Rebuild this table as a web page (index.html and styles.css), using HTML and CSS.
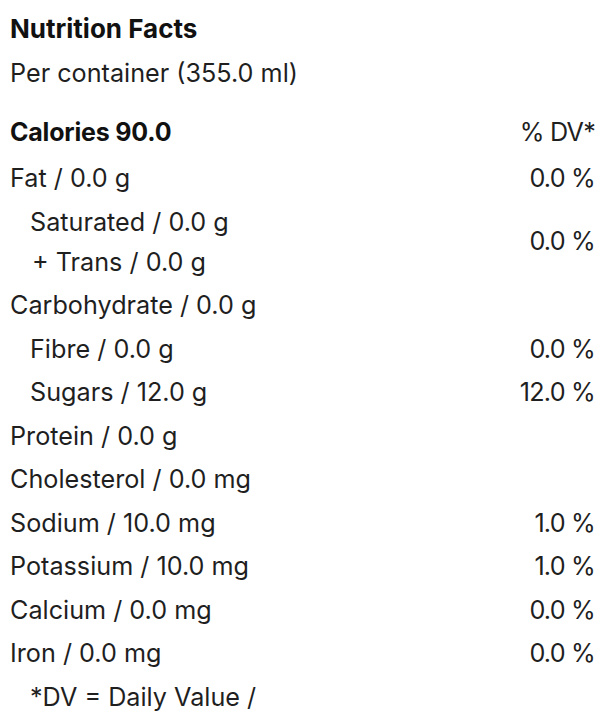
FILE: index.html
```html
<!DOCTYPE html>
<html lang="en">
<head>
<meta charset="utf-8">
<title>Nutrition Facts</title>
<link rel="stylesheet" href="styles.css">
</head>
<body>
<section class="facts">
  <h1 class="title">Nutrition Facts</h1>
  <p class="serving">Per container (355.0 ml)</p>
  <div class="row head">
    <span class="label">Calories 90.0</span>
    <span class="value">% DV*</span>
  </div>
  <div class="row">
    <span class="label">Fat / 0.0 g</span>
    <span class="value">0.0 %</span>
  </div>
  <div class="row group">
    <div class="labels">
      <span class="label sub">Saturated / 0.0 g</span>
      <span class="label sub plus">+ Trans / 0.0 g</span>
    </div>
    <span class="value">0.0 %</span>
  </div>
  <div class="row">
    <span class="label">Carbohydrate / 0.0 g</span>
  </div>
  <div class="row">
    <span class="label sub">Fibre / 0.0 g</span>
    <span class="value">0.0 %</span>
  </div>
  <div class="row">
    <span class="label sub">Sugars / 12.0 g</span>
    <span class="value">12.0 %</span>
  </div>
  <div class="row">
    <span class="label">Protein / 0.0 g</span>
  </div>
  <div class="row">
    <span class="label">Cholesterol / 0.0 mg</span>
  </div>
  <div class="row">
    <span class="label">Sodium / 10.0 mg</span>
    <span class="value">1.0 %</span>
  </div>
  <div class="row">
    <span class="label">Potassium / 10.0 mg</span>
    <span class="value">1.0 %</span>
  </div>
  <div class="row">
    <span class="label">Calcium / 0.0 mg</span>
    <span class="value">0.0 %</span>
  </div>
  <div class="row">
    <span class="label">Iron / 0.0 mg</span>
    <span class="value">0.0 %</span>
  </div>
  <div class="row">
    <span class="label sub">*DV = Daily Value /</span>
  </div>
</section>
</body>
</html>
```
FILE: styles.css
```css
html, body {
  margin: 0;
  padding: 0;
  background: #ffffff;
}
body {
  font-family: Inter, "Liberation Sans", sans-serif;
  font-size: 25.2px;
  color: #1f1f1f;
}
.facts {
  padding: 6px 13px 0 10px;
}
.title {
  margin: 0;
  font-size: 26px;
  font-weight: 700;
  line-height: 45px;
  color: #111111;
}
.serving {
  margin: 0 0 15px;
  line-height: 45px;
}
.row {
  display: flex;
  justify-content: space-between;
  align-items: center;
  height: 43.5px;
  line-height: 43.5px;
}
.row.head {
  margin-bottom: 2.5px;
  font-weight: 700;
}
.row.head .label {
  color: #111111;
  font-size: 25px;
  letter-spacing: -0.2px;
}
.row.head .value {
  font-weight: 400;
}
.row.group {
  height: auto;
  padding: 1.5px 0 2px;
}
.labels {
  display: flex;
  flex-direction: column;
}
.labels .label {
  line-height: 40px;
}
.sub {
  padding-left: 20px;
}
.plus {
  padding-left: 22px;
}
.value {
  white-space: nowrap;
  letter-spacing: -0.8px;
}
```
